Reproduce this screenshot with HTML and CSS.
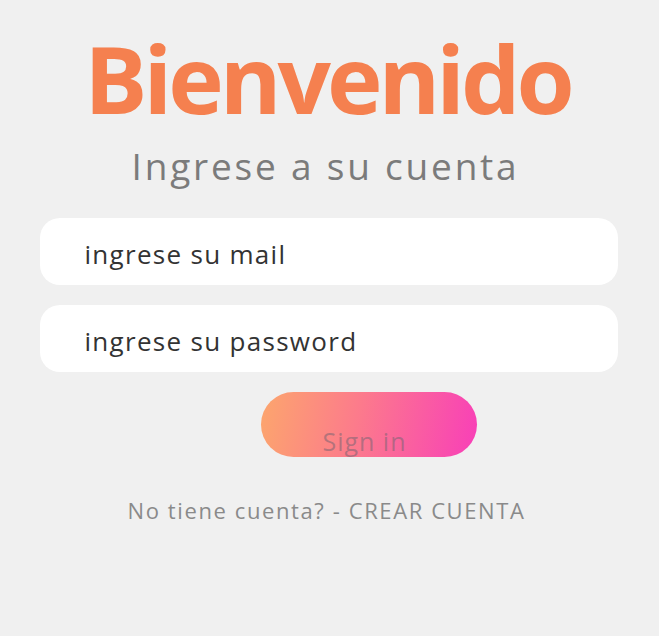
FILE: index.html
```html
<!DOCTYPE html>
<html lang="es">
<head>
<meta charset="utf-8">
<title>Bienvenido</title>
<link rel="stylesheet" href="styles.css">
</head>
<body>
<main class="login">
  <h1 class="title">Bienvenido</h1>
  <p class="subtitle">Ingrese a su cuenta</p>
  <form class="form">
    <input class="field" type="text" placeholder="ingrese su mail">
    <input class="field" type="password" placeholder="ingrese su password">
    <button class="btn" type="button">Sign in</button>
  </form>
  <p class="signup">No tiene cuenta? - <a class="signup-link">CREAR CUENTA</a></p>
</main>
</body>
</html>
```

FILE: styles.css
```css
html, body {
  margin: 0;
  padding: 0;
  background: #f0f0f0;
}
body {
  font-family: "Open Sans", "Noto Sans", sans-serif;
  width: 659px;
  height: 636px;
  overflow: hidden;
}
.login {
  display: flex;
  flex-direction: column;
  align-items: center;
  padding-top: 28px;
}
.title {
  margin: 0;
  font-size: 94px;
  line-height: 100px;
  font-weight: 700;
  color: #f5804f;
  letter-spacing: -4px;
  position: relative;
  left: -2px;
}
.subtitle {
  margin: 18px 0 0;
  font-size: 37px;
  line-height: 40px;
  color: #7b7b7b;
  letter-spacing: 2.8px;
  position: relative;
  left: -4px;
}
.form {
  margin-top: 32px;
  width: 578px;
  display: flex;
  flex-direction: column;
  gap: 20px;
  position: relative;
  left: -1px;
}
.field {
  box-sizing: border-box;
  height: 67px;
  width: 100%;
  border: none;
  outline: none;
  border-radius: 20px;
  background: #ffffff;
  padding: 4px 0 0 45px;
  font-family: inherit;
  font-size: 26px;
  letter-spacing: 1.3px;
  color: #333;
}
.field::placeholder {
  color: #333;
  opacity: 1;
}
.btn {
  box-sizing: border-box;
  align-self: flex-start;
  margin-left: 221px;
  width: 216px;
  height: 65px;
  border: none;
  border-radius: 33px;
  padding: 37px 8px 0 0;
  background: linear-gradient(100deg, #fca66d 0%, #fc7a8c 45%, #f83fb8 100%);
  font-family: inherit;
  font-size: 25px;
  line-height: 25px;
  letter-spacing: 1px;
  color: rgba(120, 100, 115, 0.55);
  display: flex;
  justify-content: center;
  align-items: flex-start;
  overflow: visible;
}
.signup {
  margin: 41px 0 0;
  font-size: 22px;
  line-height: 24px;
  letter-spacing: 1.6px;
  color: #8a8a8a;
  position: relative;
  left: -3px;
}
.signup-link {
  color: inherit;
  text-decoration: none;
}
```
